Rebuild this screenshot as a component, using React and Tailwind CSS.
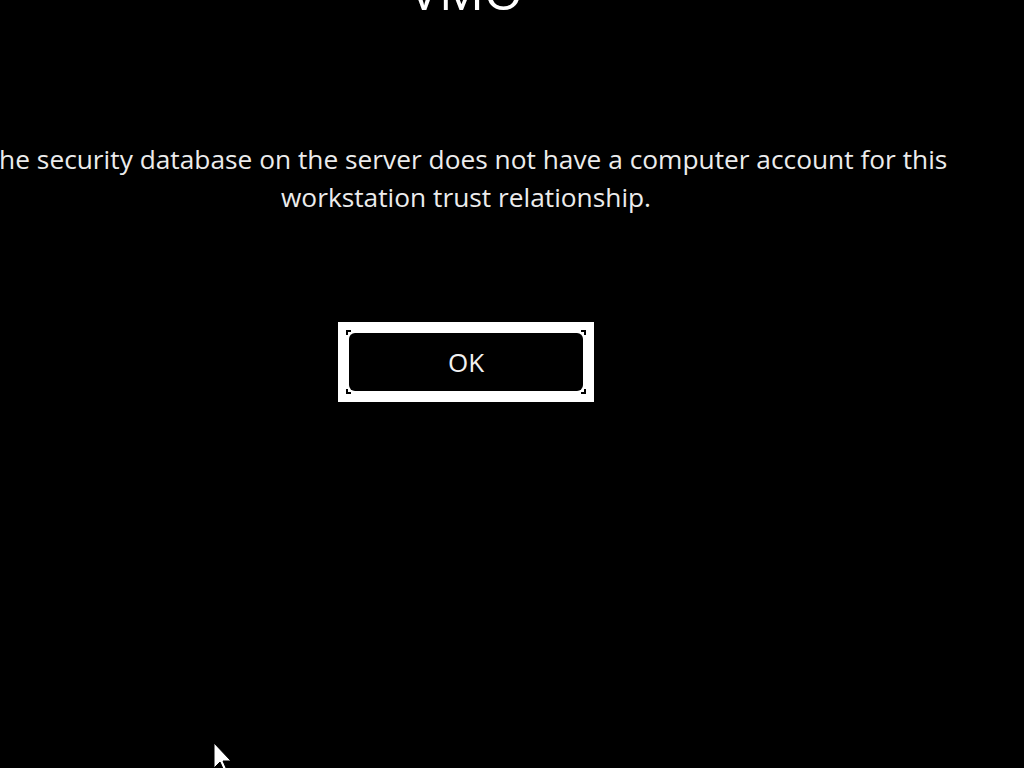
const Corner = ({ className }) => (
    <span className={`absolute w-[5px] h-[5px] border-black ${className}`} />
);

const App = () => {
    return (
        <div className="relative w-[1024px] h-[768px] overflow-hidden bg-black text-white" style={{ fontFamily: '"Open Sans", "Noto Sans", sans-serif' }}>
            <div className="w-[932px] flex flex-col items-center">
                {/* Machine name, cut off at the top */}
                <h1 className="-mt-[34px] text-[50px] leading-none font-normal">VMO</h1>

                {/* Message */}
                <div className="w-full flex justify-center mt-[124px]">
                    <p className="w-[1000px] shrink-0 text-center text-[26.3px] leading-[38px] text-[#ececec]">
                        The security database on the server does not have a computer account for this workstation trust relationship.
                    </p>
                </div>

                {/* OK button */}
                <div className="mt-[106px] w-[256px] h-[80px] bg-white p-[8px]">
                    <div className="relative w-full h-full p-[3px]">
                        <Corner className="top-0 left-0 border-t-2 border-l-2" />
                        <Corner className="top-0 right-0 border-t-2 border-r-2" />
                        <Corner className="bottom-0 left-0 border-b-2 border-l-2" />
                        <Corner className="bottom-0 right-0 border-b-2 border-r-2" />
                        <div className="w-full h-full bg-black rounded-[6px] flex items-center justify-center text-[26px] text-[#f2f2f2]">
                            OK
                        </div>
                    </div>
                </div>
            </div>

            {/* Mouse pointer */}
            <svg className="absolute left-[213px] top-[742px]" width="20" height="30" viewBox="0 0 20 30">
                <path d="M1 1 L1 26 L7 20 L11 29 L14 28 L10 19 L18 19 Z" fill="#fff" stroke="#000" strokeWidth="1" />
            </svg>
        </div>
    );
};

export default App;
